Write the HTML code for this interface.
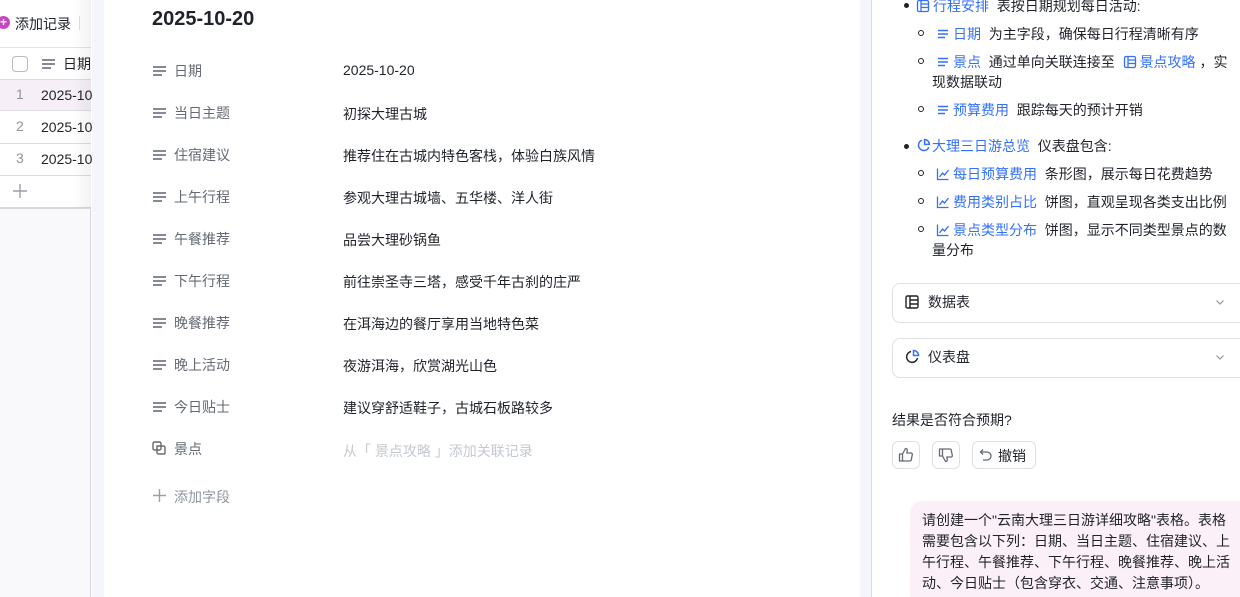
<!DOCTYPE html>
<html style="overflow:hidden;width:1240px;height:597px"><head><meta charset="utf-8"><style>
*{margin:0;padding:0;box-sizing:border-box}
body{width:1240px;height:597px;overflow:hidden;position:relative;background:#fff;font-family:"Liberation Sans","Noto Sans CJK SC",sans-serif;color:#1f2329;font-size:14px}
.a{position:absolute;white-space:nowrap}
.ham{position:absolute;width:13px;height:10px}
.ham i{display:block;height:1.6px;background:#858a99;margin-bottom:2.6px}
.ham i:nth-child(3){width:70%}
.lbl{color:#646a73}
.blue{color:#3370ff}
.ic{display:inline-block;vertical-align:-2px;margin-right:3px}
.box{position:absolute;left:892px;width:360px;height:40px;border:1px solid #dee0e3;border-radius:8px}
.btn{position:absolute;top:441px;height:28px;border:1px solid #dee0e3;border-radius:6px}
.dot{position:absolute;width:5px;height:5px;border-radius:50%;background:#1f2329}
.circ{position:absolute;width:6px;height:6px;border-radius:50%;border:1px solid #1f2329}
</style></head><body>
<svg width="0" height="0" style="position:absolute">
<defs>
<symbol id="h" viewBox="0 0 14 14"><path d="M2 3.5h10M2 7h10M2 10.5h7" stroke="#3370ff" stroke-width="1.4" fill="none"/></symbol>
<symbol id="t" viewBox="0 0 14 14"><g fill="none" stroke="#3370ff" stroke-width="1.3"><rect x="1.5" y="1.5" width="11" height="11" rx="1.5"/><path d="M5 1.5v11M5 5h7.5M5 8.5h7.5"/></g></symbol>
<symbol id="c" viewBox="0 0 14 14"><g fill="none" stroke="#3370ff" stroke-width="1.3"><path d="M1.5 1.5v11h11"/><path d="M3.5 10l3-4 2 2 4-5"/></g></symbol>
<symbol id="p" viewBox="0 0 14 14"><g fill="none" stroke="#3370ff" stroke-width="1.4"><path d="M12 8.5A5 5 0 1 1 5.5 2"/><path d="M8 1.5a4.5 4.5 0 0 1 4.5 4.5H8z"/></g></symbol>
<symbol id="v" viewBox="0 0 12 12"><path d="M2.5 4.5l3.5 3.5 3.5-3.5" fill="none" stroke="#8f959e" stroke-width="1.2"/></symbol>
</defs></svg>
<!-- left table -->
<div class="a" style="left:0;top:0;width:91px;height:597px;background:#f9f8fb;border-right:1px solid #d5d6da"></div>
<div class="a" style="left:0;top:0;width:91px;height:208px;background:#fff"></div>
<div class="a" style="left:-3px;top:16px;width:13px;height:13px;border-radius:50%;background:#c944c0;color:#fff;font-size:12px;line-height:13px;text-align:center;font-weight:bold">+</div>
<div class="a" style="left:15px;top:14px;font-size:14px">添加记录</div>
<div class="a" style="left:79px;top:16px;width:1px;height:14px;background:#dee0e3"></div>
<div class="a" style="left:0;top:47px;width:91px;height:1px;background:#e3e3e6"></div>
<div class="a" style="left:12px;top:56px;width:16px;height:16px;border:1px solid #b8bbc4;border-radius:4px"></div>
<div class="ham" style="left:42px;top:59px"><i></i><i></i><i></i></div>
<div class="a" style="left:63px;top:54px">日期</div>
<div class="a" style="left:0;top:79px;width:91px;height:32px;background:#f6eff7;border-top:1px solid #dcdce0;border-bottom:1px solid #dcdce0"></div>
<div class="a" style="left:0;top:143px;width:91px;height:1px;background:#dcdce0"></div>
<div class="a" style="left:0;top:175px;width:91px;height:1px;background:#dcdce0"></div>
<div class="a" style="left:0;top:207px;width:91px;height:2px;background:#d8d8dc"></div>
<div class="a" style="left:16px;top:86px;color:#8f959e">1</div><div class="a" style="left:41px;top:87px">2025-10</div>
<div class="a" style="left:16px;top:118px;color:#8f959e">2</div><div class="a" style="left:41px;top:119px">2025-10</div>
<div class="a" style="left:16px;top:150px;color:#8f959e">3</div><div class="a" style="left:41px;top:151px">2025-10</div>
<svg class="a" style="left:13px;top:184px" width="14" height="14" viewBox="0 0 14 14"><path d="M7 0v14M0 7h14" stroke="#9aa0aa" stroke-width="1.4"/></svg>
<div class="a" style="left:72px;top:0;width:19px;height:208px;background:linear-gradient(90deg,rgba(0,0,0,0),rgba(0,0,0,.05))"></div>
<!-- modal -->
<div class="a" style="left:92px;top:0;width:12px;height:597px;background:#f5f6fb"></div>
<div class="a" style="left:104px;top:0;width:756px;height:597px;background:#fff"></div>
<div class="a" style="left:860px;top:0;width:12px;height:597px;background:#f5f6fb;border-right:1px solid #dcdde2"></div>
<div class="a" style="left:152px;top:8px;font-size:20px;font-weight:bold">2025-10-20</div>
<div class="ham" style="left:153px;top:66px"><i></i><i></i><i></i></div><div class="a lbl" style="left:174px;top:61px">日期</div><div class="a" style="left:343px;top:62px">2025-10-20</div>
<div class="ham" style="left:153px;top:108px"><i></i><i></i><i></i></div><div class="a lbl" style="left:174px;top:103px">当日主题</div><div class="a" style="left:343px;top:104px">初探大理古城</div>
<div class="ham" style="left:153px;top:150px"><i></i><i></i><i></i></div><div class="a lbl" style="left:174px;top:145px">住宿建议</div><div class="a" style="left:343px;top:146px">推荐住在古城内特色客栈，体验白族风情</div>
<div class="ham" style="left:153px;top:192px"><i></i><i></i><i></i></div><div class="a lbl" style="left:174px;top:187px">上午行程</div><div class="a" style="left:343px;top:188px">参观大理古城墙、五华楼、洋人街</div>
<div class="ham" style="left:153px;top:234px"><i></i><i></i><i></i></div><div class="a lbl" style="left:174px;top:229px">午餐推荐</div><div class="a" style="left:343px;top:230px">品尝大理砂锅鱼</div>
<div class="ham" style="left:153px;top:276px"><i></i><i></i><i></i></div><div class="a lbl" style="left:174px;top:271px">下午行程</div><div class="a" style="left:343px;top:272px">前往崇圣寺三塔，感受千年古刹的庄严</div>
<div class="ham" style="left:153px;top:318px"><i></i><i></i><i></i></div><div class="a lbl" style="left:174px;top:313px">晚餐推荐</div><div class="a" style="left:343px;top:314px">在洱海边的餐厅享用当地特色菜</div>
<div class="ham" style="left:153px;top:360px"><i></i><i></i><i></i></div><div class="a lbl" style="left:174px;top:355px">晚上活动</div><div class="a" style="left:343px;top:356px">夜游洱海，欣赏湖光山色</div>
<div class="ham" style="left:153px;top:402px"><i></i><i></i><i></i></div><div class="a lbl" style="left:174px;top:397px">今日贴士</div><div class="a" style="left:343px;top:398px">建议穿舒适鞋子，古城石板路较多</div>
<svg class="a" style="left:152px;top:441px" width="14" height="14" viewBox="0 0 14 14" fill="none" stroke="#646a73" stroke-width="1.4"><rect x="1" y="1" width="8" height="8" rx="1.5"/><path d="M5 5h6.5a1.5 1.5 0 0 1 1.5 1.5V12a1 1 0 0 1-1 1H6.5A1.5 1.5 0 0 1 5 11.5z"/></svg>
<div class="a lbl" style="left:174px;top:439px">景点</div>
<div class="a" style="left:343px;top:441px;color:#c4c8d0">从「 景点攻略 」添加关联记录</div>
<svg class="a" style="left:153px;top:489px" width="13" height="13" viewBox="0 0 13 13"><path d="M6.5 0v13M0 6.5h13" stroke="#9aa0aa" stroke-width="1.4"/></svg>
<div class="a" style="left:174px;top:487px;color:#8f959e">添加字段</div>
<!-- chat -->
<div class="dot" style="left:904px;top:3px"></div>
<div class="a" style="left:916px;top:-4px"><svg class="ic" width="14" height="14"><use href="#t"/></svg><span class="blue">行程安排</span> &nbsp;表按日期规划每日活动:</div>
<div class="circ" style="left:918px;top:30px"></div>
<div class="a" style="left:936px;top:24px"><svg class="ic" width="14" height="14"><use href="#h"/></svg><span class="blue">日期</span> &nbsp;为主字段，确保每日行程清晰有序</div>
<div class="circ" style="left:918px;top:58px"></div>
<div class="a" style="left:936px;top:52px"><svg class="ic" width="14" height="14"><use href="#h"/></svg><span class="blue">景点</span> &nbsp;通过单向关联连接至 &nbsp;<svg class="ic" width="14" height="14"><use href="#t"/></svg><span class="blue">景点攻略</span> ，实</div>
<div class="a" style="left:932px;top:72px">现数据联动</div>
<div class="circ" style="left:918px;top:106px"></div>
<div class="a" style="left:936px;top:100px"><svg class="ic" width="14" height="14"><use href="#h"/></svg><span class="blue">预算费用</span> &nbsp;跟踪每天的预计开销</div>
<div class="dot" style="left:904px;top:144px"></div>
<div class="a" style="left:916px;top:136px"><svg class="ic" width="15" height="15" style="margin-right:1px"><use href="#p"/></svg><span class="blue">大理三日游总览</span> &nbsp;仪表盘包含:</div>
<div class="circ" style="left:918px;top:170px"></div>
<div class="a" style="left:936px;top:164px"><svg class="ic" width="14" height="14"><use href="#c"/></svg><span class="blue">每日预算费用</span> &nbsp;条形图，展示每日花费趋势</div>
<div class="circ" style="left:918px;top:198px"></div>
<div class="a" style="left:936px;top:192px"><svg class="ic" width="14" height="14"><use href="#c"/></svg><span class="blue">费用类别占比</span> &nbsp;饼图，直观呈现各类支出比例</div>
<div class="circ" style="left:918px;top:226px"></div>
<div class="a" style="left:936px;top:220px"><svg class="ic" width="14" height="14"><use href="#c"/></svg><span class="blue">景点类型分布</span> &nbsp;饼图，显示不同类型景点的数</div>
<div class="a" style="left:932px;top:240px">量分布</div>
<div class="box" style="top:283px"></div>
<svg class="a" style="left:905px;top:295px" width="14" height="14" viewBox="0 0 14 14" fill="none" stroke="#1f2329" stroke-width="1.4"><rect x="1" y="1" width="12" height="12" rx="1.5"/><path d="M5 1v12M5 5h8M5 9h8"/></svg>
<div class="a" style="left:928px;top:292px">数据表</div>
<svg class="a" style="left:1214px;top:296px" width="12" height="12"><use href="#v"/></svg>
<div class="box" style="top:338px"></div>
<svg class="a" style="left:905px;top:349px" width="15" height="15" viewBox="0 0 15 15" fill="none" stroke-width="1.5"><path d="M12.5 9A5.5 5.5 0 1 1 6 2.5" stroke="#1f2329"/><path d="M8.5 1.5a5 5 0 0 1 5 5h-5z" stroke="#3370ff"/></svg>
<div class="a" style="left:928px;top:347px">仪表盘</div>
<svg class="a" style="left:1214px;top:351px" width="12" height="12"><use href="#v"/></svg>
<div class="a" style="left:892px;top:410px">结果是否符合预期?</div>
<div class="btn" style="left:892px;width:28px"></div>
<svg class="a" style="left:898px;top:447px" width="16" height="16" viewBox="0 0 16 16" fill="none" stroke="#646a73" stroke-width="1.3" stroke-linejoin="round"><path d="M1.5 7h3v7h-3z"/><path d="M4.5 7l3-5.5c1.3 0 2 .8 1.8 2L8.8 6H13a1.3 1.3 0 0 1 1.3 1.5l-1 5.3a1.5 1.5 0 0 1-1.5 1.2H4.5"/></svg>
<div class="btn" style="left:932px;width:28px"></div>
<svg class="a" style="left:938px;top:447px" width="16" height="16" viewBox="0 0 16 16" fill="none" stroke="#646a73" stroke-width="1.3" stroke-linejoin="round"><path d="M1.5 2h3v7h-3z"/><path d="M4.5 9l3 5.5c1.3 0 2-.8 1.8-2L8.8 10H13a1.3 1.3 0 0 0 1.3-1.5l-1-5.3A1.5 1.5 0 0 0 11.8 2H4.5"/></svg>
<div class="btn" style="left:972px;width:64px"></div>
<svg class="a" style="left:979px;top:448px" width="14" height="14" viewBox="0 0 14 14" fill="none" stroke="#646a73" stroke-width="1.3"><path d="M4 1.5L1.5 4 4 6.5"/><path d="M1.5 4H8a4 4 0 0 1 0 8H4"/></svg>
<div class="a" style="left:998px;top:446px">撤销</div>
<div class="a" style="left:910px;top:501px;width:340px;height:110px;background:#fbeff8;border-radius:12px"></div>
<div class="a" style="left:922px;top:510px;line-height:21px;white-space:normal;width:316px">请创建一个"云南大理三日游详细攻略"表格。表格需要包含以下列：日期、当日主题、住宿建议、上午行程、午餐推荐、下午行程、晚餐推荐、晚上活动、今日贴士（包含穿衣、交通、注意事项）。</div>
</body></html>
